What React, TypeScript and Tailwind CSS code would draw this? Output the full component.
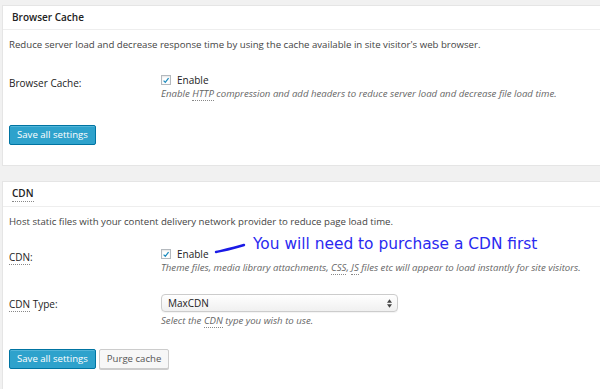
import React from "react";

const Abbr = ({ children }: { children: React.ReactNode }) => (
  <span className="border-b border-dotted border-[#888]">{children}</span>
);

const Check = () => (
  <span className="inline-flex h-[10px] w-[10px] items-center justify-center border border-[#b4b9be] bg-white shadow-[inset_0_1px_2px_rgba(0,0,0,0.1)]">
    <svg viewBox="0 0 10 10" className="h-[9px] w-[9px]">
      <path d="M2 5.2 L4.1 7.3 L8.2 2" fill="none" stroke="#1e8cbe" strokeWidth="1.6" />
    </svg>
  </span>
);

const Button = ({ primary, children }: { primary?: boolean; children: React.ReactNode }) =>
  primary ? (
    <button className="h-[20px] rounded-[2px] border border-[#0074a2] bg-[#2ea2cc] px-[7px] text-[9.6px] font-normal text-white shadow-[inset_0_1px_0_rgba(120,200,230,0.5)]">
      {children}
    </button>
  ) : (
    <button className="h-[20px] rounded-[2px] border border-[#ccc] bg-[#f7f7f7] px-[7px] text-[9.6px] text-[#555] shadow-[0_1px_0_#ccc]">
      {children}
    </button>
  );

const Row = ({ label, children, className = "" }: { label: React.ReactNode; children: React.ReactNode; className?: string }) => (
  <div className={`flex ${className}`}>
    <div className="w-[152px] shrink-0 text-[10px] leading-[14px] text-[#222]">{label}</div>
    <div className="flex-1">{children}</div>
  </div>
);

const Hint = ({ children }: { children: React.ReactNode }) => (
  <div className="text-[9.65px] leading-[13px] italic text-[#666]">{children}</div>
);

const Enable = () => (
  <div className="flex h-[14px] items-center gap-[6px] text-[10px] leading-[14px] text-[#222]">
    <Check />
    <span>Enable</span>
  </div>
);

export default function App() {
  return (
    <div className="h-[389px] w-[600px] overflow-hidden bg-[#f1f1f1] pt-[5px] pl-[2px] font-['Open_Sans',sans-serif] text-[#444]">
      {/* Browser Cache */}
      <div className="border-t border-l border-b border-[#e5e5e5] bg-white">
        <div className="flex h-[24px] items-center border-b border-[#eee] pl-[9px] text-[10px] font-semibold text-[#222]">
          Browser Cache
        </div>
        <div className="px-[6px]">
          <p className="pt-[8px] text-[9.65px] leading-[14px] text-[#444]">
            Reduce server load and decrease response time by using the cache available in site visitor's web browser.
          </p>
          <Row label={<span className="relative top-[3px]">Browser Cache:</span>} className="mt-[21px] items-start">
            <Enable />
            <Hint>
              Enable <Abbr>HTTP</Abbr> compression and add headers to reduce server load and decrease file load time.
            </Hint>
          </Row>
          <div className="pt-[20px] pb-[20px]">
            <Button primary>Save all settings</Button>
          </div>
        </div>
      </div>

      <div className="h-[15px]" />

      {/* CDN */}
      <div className="relative border-t border-l border-[#e5e5e5] bg-white pb-[40px]">
        <div className="flex h-[25px] items-center border-b border-[#eee] pl-[9px] text-[10px] font-semibold text-[#222]">
          <Abbr>CDN</Abbr>
        </div>
        <div className="px-[6px]">
          <p className="pt-[8px] text-[9.65px] leading-[14px] text-[#444]">
            Host static files with your content delivery network provider to reduce page load time.
          </p>
          <Row label={<span className="relative top-[3px]"><Abbr>CDN</Abbr>:</span>} className="mt-[18px]">
            <Enable />
            <Hint>
              Theme files, media library attachments, <Abbr>CSS</Abbr>, <Abbr>JS</Abbr> files etc will appear to load instantly for site visitors.
            </Hint>
          </Row>
          <Row label={<span className="relative top-[3px]"><Abbr>CDN</Abbr> Type:</span>} className="mt-[20px]">
            <div className="flex h-[18px] w-[237px] items-center justify-between rounded-[4px] border border-[#ccc] bg-gradient-to-b from-white to-[#f0f0f0] pl-[6px] pr-[5px] text-[10px] text-[#222] shadow-[0_1px_1px_rgba(0,0,0,0.05)]">
              <span>MaxCDN</span>
              <svg viewBox="0 0 6 10" className="h-[9px] w-[5px]">
                <path d="M0 4 L3 0 L6 4 Z M0 6 L3 10 L6 6 Z" fill="#444" />
              </svg>
            </div>
            <div className="mt-[2px]">
              <Hint>
                Select the <Abbr>CDN</Abbr> type you wish to use.
              </Hint>
            </div>
          </Row>
          <div className="flex gap-[3px] pt-[22px]">
            <Button primary>Save all settings</Button>
            <Button>Purge cache</Button>
          </div>
        </div>

        {/* annotation */}
        <svg className="absolute left-[210px] top-[59px] h-[14px] w-[34px]" viewBox="0 0 34 14">
          <path d="M3 11 C12 9 22 7 31 4" fill="none" stroke="#1a1ae6" strokeWidth="2.4" strokeLinecap="round" />
        </svg>
        <div className="absolute left-[250px] top-[52px] font-['DejaVu_Sans',sans-serif] text-[15.4px] leading-[20px] text-[#2a2af0]">
          You will need to purchase a CDN first
        </div>
      </div>
    </div>
  );
}
